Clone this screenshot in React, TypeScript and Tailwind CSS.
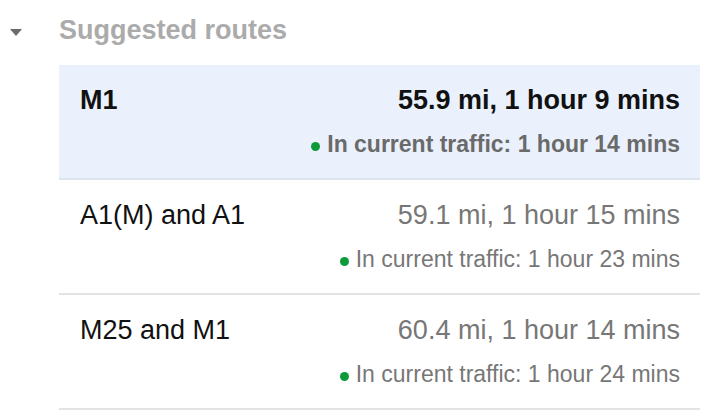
import React from "react";

type Route = {
  name: string;
  summary: string;
  traffic: string;
  selected?: boolean;
};

const routes: Route[] = [
  { name: "M1", summary: "55.9 mi, 1 hour 9 mins", traffic: "In current traffic: 1 hour 14 mins", selected: true },
  { name: "A1(M) and A1", summary: "59.1 mi, 1 hour 15 mins", traffic: "In current traffic: 1 hour 23 mins" },
  { name: "M25 and M1", summary: "60.4 mi, 1 hour 14 mins", traffic: "In current traffic: 1 hour 24 mins" },
];

export default function App() {
  return (
    <div
      className="w-[726px] h-[420px] bg-white overflow-hidden relative"
      style={{ fontFamily: '"Liberation Sans", Arial, sans-serif' }}
    >
      <div className="flex items-start pt-[15px] mb-[19px]">
        <div className="w-[59px] flex pl-[10px] pt-[14px]">
          <svg width="12" height="7" viewBox="0 0 12 7">
            <polygon points="0,0 12,0 6,7" fill="#6b6b6b" />
          </svg>
        </div>
        <div className="text-[27px] leading-[31px] font-bold text-[#ababab]">Suggested routes</div>
      </div>
      <div className="ml-[59px] w-[641px] flex flex-col">
        {routes.map((r) => (
          <div
            key={r.name}
            className={
              r.selected
                ? "flex justify-between pl-[21px] pr-[20px] pt-[20px] pb-[20px] bg-[#eaf1fc] border-b-2 border-[#dde4ee]"
                : "flex justify-between pl-[21px] pr-[20px] pt-[20px] pb-[20px] bg-white border-b-2 border-[#e3e3e3]"
            }
          >
            <div
              className={
                r.selected
                  ? "text-[27px] leading-[31px] font-bold text-[#111]"
                  : "text-[27px] leading-[31px] text-[#111]"
              }
            >
              {r.name}
            </div>
            <div className="flex flex-col items-end">
              <div
                className={
                  r.selected
                    ? "text-[27px] leading-[31px] font-bold text-[#111]"
                    : "text-[27px] leading-[31px] text-[#777]"
                }
              >
                {r.summary}
              </div>
              <div className="mt-[15px] flex items-center">
                <span className="w-[9px] h-[9px] rounded-full bg-[#0c9a3a] mr-[7px] mt-[4px]" />
                <span
                  className={
                    r.selected
                      ? "text-[23px] leading-[27px] font-bold text-[#6a6a6a]"
                      : "text-[23px] leading-[27px] text-[#777]"
                  }
                >
                  {r.traffic}
                </span>
              </div>
            </div>
          </div>
        ))}
      </div>
    </div>
  );
}
